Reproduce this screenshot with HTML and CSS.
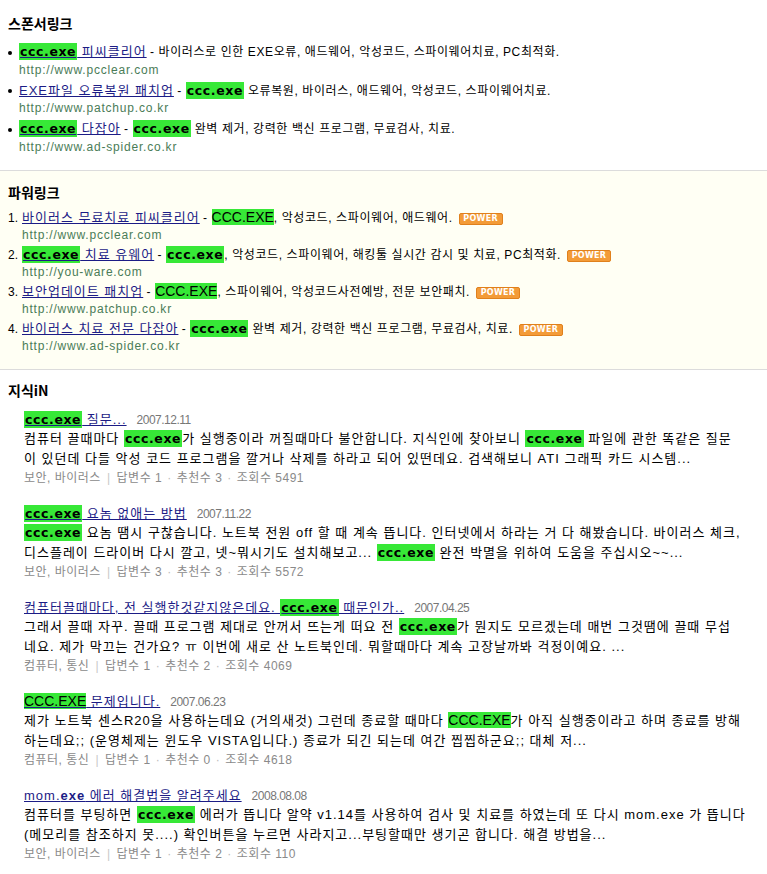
FILE: index.html
```html
<!DOCTYPE html>
<html lang="ko">
<head>
<meta charset="utf-8">
<link rel="stylesheet" href="styles.css">
</head>
<body>
<section class="sponsor">
  <h2 class="sec-title">스폰서링크</h2>
  <ul class="ad-list">
    <li class="ad">
      <div class="ad-line"><span class="bullet"></span><a class="ad-link" href="#"><span class="hl hl-b">ccc.exe</span> 피씨클리어</a> <span class="desc">- 바이러스로 인한 EXE오류, 애드웨어, 악성코드, 스파이웨어치료, PC최적화.</span></div>
      <div class="ad-url">http://www.pcclear.com</div>
    </li>
    <li class="ad">
      <div class="ad-line"><span class="bullet"></span><a class="ad-link" href="#">EXE파일 오류복원 패치업</a> <span class="desc">- <span class="hl hl-b">ccc.exe</span> 오류복원, 바이러스, 애드웨어, 악성코드, 스파이웨어치료.</span></div>
      <div class="ad-url">http://www.patchup.co.kr</div>
    </li>
    <li class="ad">
      <div class="ad-line"><span class="bullet"></span><a class="ad-link" href="#"><span class="hl hl-b">ccc.exe</span> 다잡아</a> <span class="desc">- <span class="hl hl-b">ccc.exe</span> 완벽 제거, 강력한 백신 프로그램, 무료검사, 치료.</span></div>
      <div class="ad-url">http://www.ad-spider.co.kr</div>
    </li>
  </ul>
</section>

<section class="power">
  <h2 class="sec-title">파워링크</h2>
  <ol class="pw-list">
    <li class="pw">
      <div class="pw-line"><span class="num">1.</span><a class="ad-link" href="#">바이러스 무료치료 피씨클리어</a> <span class="desc">- <span class="hl hl-u">CCC.EXE</span>, 악성코드, 스파이웨어, 애드웨어. <span class="badge">POWER</span></span></div>
      <div class="pw-url">http://www.pcclear.com</div>
    </li>
    <li class="pw">
      <div class="pw-line"><span class="num">2.</span><a class="ad-link" href="#"><span class="hl hl-b">ccc.exe</span> 치료 유웨어</a> <span class="desc">- <span class="hl hl-b">ccc.exe</span>, 악성코드, 스파이웨어, 해킹툴 실시간 감시 및 치료, PC최적화. <span class="badge">POWER</span></span></div>
      <div class="pw-url">http://you-ware.com</div>
    </li>
    <li class="pw">
      <div class="pw-line"><span class="num">3.</span><a class="ad-link" href="#">보안업데이트 패치업</a> <span class="desc">- <span class="hl hl-u">CCC.EXE</span>, 스파이웨어, 악성코드사전예방, 전문 보안패치. <span class="badge">POWER</span></span></div>
      <div class="pw-url">http://www.patchup.co.kr</div>
    </li>
    <li class="pw">
      <div class="pw-line"><span class="num">4.</span><a class="ad-link" href="#">바이러스 치료 전문 다잡아</a> <span class="desc">- <span class="hl hl-b">ccc.exe</span> 완벽 제거, 강력한 백신 프로그램, 무료검사, 치료. <span class="badge">POWER</span></span></div>
      <div class="pw-url">http://www.ad-spider.co.kr</div>
    </li>
  </ol>
</section>

<section class="kin">
  <h2 class="sec-title">지식iN</h2>
  <div class="kin-list">
    <article class="q">
      <div class="q-head"><a class="q-link" href="#"><span class="hl hl-b">ccc.exe</span> 질문...</a><span class="date">2007.12.11</span></div>
      <p class="q-body">컴퓨터 끌때마다 <span class="hl hl-b">ccc.exe</span>가 실행중이라 꺼질때마다 불안합니다. 지식인에 찾아보니 <span class="hl hl-b">ccc.exe</span> 파일에 관한 똑같은 질문<br>이 있던데 다들 악성 코드 프로그램을 깔거나 삭제를 하라고 되어 있떤데요. 검색해보니 ATI 그래픽 카드 시스템...</p>
      <div class="meta">보안, 바이러스<span class="bar">|</span>답변수 1<span class="dot">·</span>추천수 3<span class="dot">·</span>조회수 5491</div>
    </article>
    <article class="q">
      <div class="q-head"><a class="q-link" href="#"><span class="hl hl-b">ccc.exe</span> 요놈 없애는 방법</a><span class="date">2007.11.22</span></div>
      <p class="q-body"><span class="hl hl-b">ccc.exe</span> 요놈 땜시 구찮습니다. 노트북 전원 off 할 때 계속 뜹니다. 인터넷에서 하라는 거 다 해봤습니다. 바이러스 체크,<br>디스플레이 드라이버 다시 깔고, 넷~뭐시기도 설치해보고... <span class="hl hl-b">ccc.exe</span> 완전 박멸을 위하여 도움을 주십시오~~...</p>
      <div class="meta">보안, 바이러스<span class="bar">|</span>답변수 3<span class="dot">·</span>추천수 3<span class="dot">·</span>조회수 5572</div>
    </article>
    <article class="q">
      <div class="q-head"><a class="q-link" href="#">컴퓨터끌때마다, 전 실행한것같지않은데요. <span class="hl hl-b">ccc.exe</span> 때문인가..</a><span class="date">2007.04.25</span></div>
      <p class="q-body">그래서 끌때 자꾸. 끌때 프로그램 제대로 안꺼서 뜨는게 떠요 전 <span class="hl hl-b">ccc.exe</span>가 뭔지도 모르겠는데 매번 그것땜에 끌때 무섭<br>네요. 제가 막끄는 건가요? ㅠ 이번에 새로 산 노트북인데. 뭐할때마다 계속 고장날까봐 걱정이예요. ...</p>
      <div class="meta">컴퓨터, 통신<span class="bar">|</span>답변수 1<span class="dot">·</span>추천수 2<span class="dot">·</span>조회수 4069</div>
    </article>
    <article class="q">
      <div class="q-head"><a class="q-link" href="#"><span class="hl hl-u">CCC.EXE</span> 문제입니다.</a><span class="date">2007.06.23</span></div>
      <p class="q-body">제가 노트북 센스R20을 사용하는데요 (거의새것) 그런데 종료할 때마다 <span class="hl hl-u">CCC.EXE</span>가 아직 실행중이라고 하며 종료를 방해<br>하는데요;; (운영체제는 윈도우 VISTA입니다.) 종료가 되긴 되는데 여간 찝찝하군요;; 대체 저...</p>
      <div class="meta">컴퓨터, 통신<span class="bar">|</span>답변수 1<span class="dot">·</span>추천수 0<span class="dot">·</span>조회수 4618</div>
    </article>
    <article class="q">
      <div class="q-head"><a class="q-link" href="#">mom.<b class="strong">exe</b> 에러 해결법을 알려주세요</a><span class="date">2008.08.08</span></div>
      <p class="q-body">컴퓨터를 부팅하면 <span class="hl hl-b">ccc.exe</span> 에러가 뜹니다 알약 v1.14를 사용하여 검사 및 치료를 하였는데 또 다시 mom.exe 가 뜹니다<br>(메모리를 참조하지 못....) 확인버튼을 누르면 사라지고...부팅할때만 생기곤 합니다. 해결 방법을...</p>
      <div class="meta">보안, 바이러스<span class="bar">|</span>답변수 1<span class="dot">·</span>추천수 2<span class="dot">·</span>조회수 110</div>
    </article>
  </div>
</section>
</body>
</html>
```

FILE: styles.css
```css
* { box-sizing: border-box; }
body {
  margin: 0;
  background: #fff;
  color: #000;
  font-family: "Liberation Sans", "Noto Sans CJK KR", sans-serif;
  font-size: 12px;
}
ul, ol { list-style: none; margin: 0; padding: 0; }
p { margin: 0; }
a { color: #1c1c86; text-decoration: underline; }

.sec-title {
  margin: 0;
  font-size: 14px;
  font-weight: bold;
  line-height: 18px;
  font-family: "Noto Sans CJK KR", sans-serif;
}

.sponsor {
  padding: 14px 8px 13px 8px;
  border-bottom: 1px solid #dcdcdc;
}
.ad-list { margin-top: 9px; display: flex; flex-direction: column; }
.ad-line { height: 19.5px; line-height: 19.5px; padding-top: 2px; white-space: nowrap; }
.pw-line { height: 19px; line-height: 19px; padding-top: 2px; white-space: nowrap; }
.ad-line > *, .pw-line > *, .desc > *, .q-link > *, .q-body > * { line-height: 1; }
.ad-link { font-size: 13px; letter-spacing: 1px; }
.desc { font-size: 12px; letter-spacing: 0.6px; }
.bullet {
  display: inline-block;
  width: 4px; height: 4px;
  border-radius: 50%;
  background: #000;
  margin: 0 7px 0 0;
  vertical-align: middle;
}
.ad-url, .pw-url {
  height: 19px;
  line-height: 19px;
  color: #4a7c57;
  padding-left: 11px;
  letter-spacing: 0.8px;
}

.power {
  background: #fffff4;
  padding: 12px 8px 14px 8px;
  border-bottom: 1px solid #dcdcdc;
}
.pw-list { margin-top: 6px; display: flex; flex-direction: column; }
.num { display: inline-block; width: 14px; font-size: 12px; }
.pw-url { height: 18px; line-height: 18px; padding-left: 14px; }
.badge {
  display: inline-block;
  width: 44px;
  height: 12px;
  line-height: 10px;
  border: 1px solid #e0801c;
  border-radius: 2px;
  background: #f39b38;
  color: #fff;
  font-family: "DejaVu Sans", sans-serif;
  font-weight: bold;
  font-size: 8px;
  text-align: center;
  letter-spacing: 0.3px;
  vertical-align: 1px;
  margin-left: 2px;
}

.hl { background: #37e837; color: #000; }
.hl-b {
  font-family: "DejaVu Sans", sans-serif;
  font-weight: bold;
  font-size: 12.5px;
  letter-spacing: 0.6px;
  padding: 1px 1px;
}
.hl-u {
  font-family: "Liberation Sans", sans-serif;
  font-size: 14px;
  letter-spacing: 0;
}

.kin { padding: 11px 8px 10px 8px; }
.kin-list { margin-top: 9px; padding-left: 16px; display: flex; flex-direction: column; gap: 14px; }
.q-head { height: 20px; line-height: 20px; padding-top: 2px; white-space: nowrap; }
.q-link { color: #1c1c86; font-size: 13px; letter-spacing: 1px; }
.strong { font-weight: bold; }
.date { color: #777; margin-left: 10px; font-size: 12px; letter-spacing: -0.5px; }
.q-body { height: 40px; line-height: 20px; padding-top: 1px; font-size: 13px; letter-spacing: 1px; white-space: nowrap; }
.meta { height: 20px; line-height: 20px; color: #8a8a8a; letter-spacing: 0.5px; }
.bar { color: #c8c8c8; margin: 0 6px; }
.dot { color: #bbb; margin: 0 5px; }
```
